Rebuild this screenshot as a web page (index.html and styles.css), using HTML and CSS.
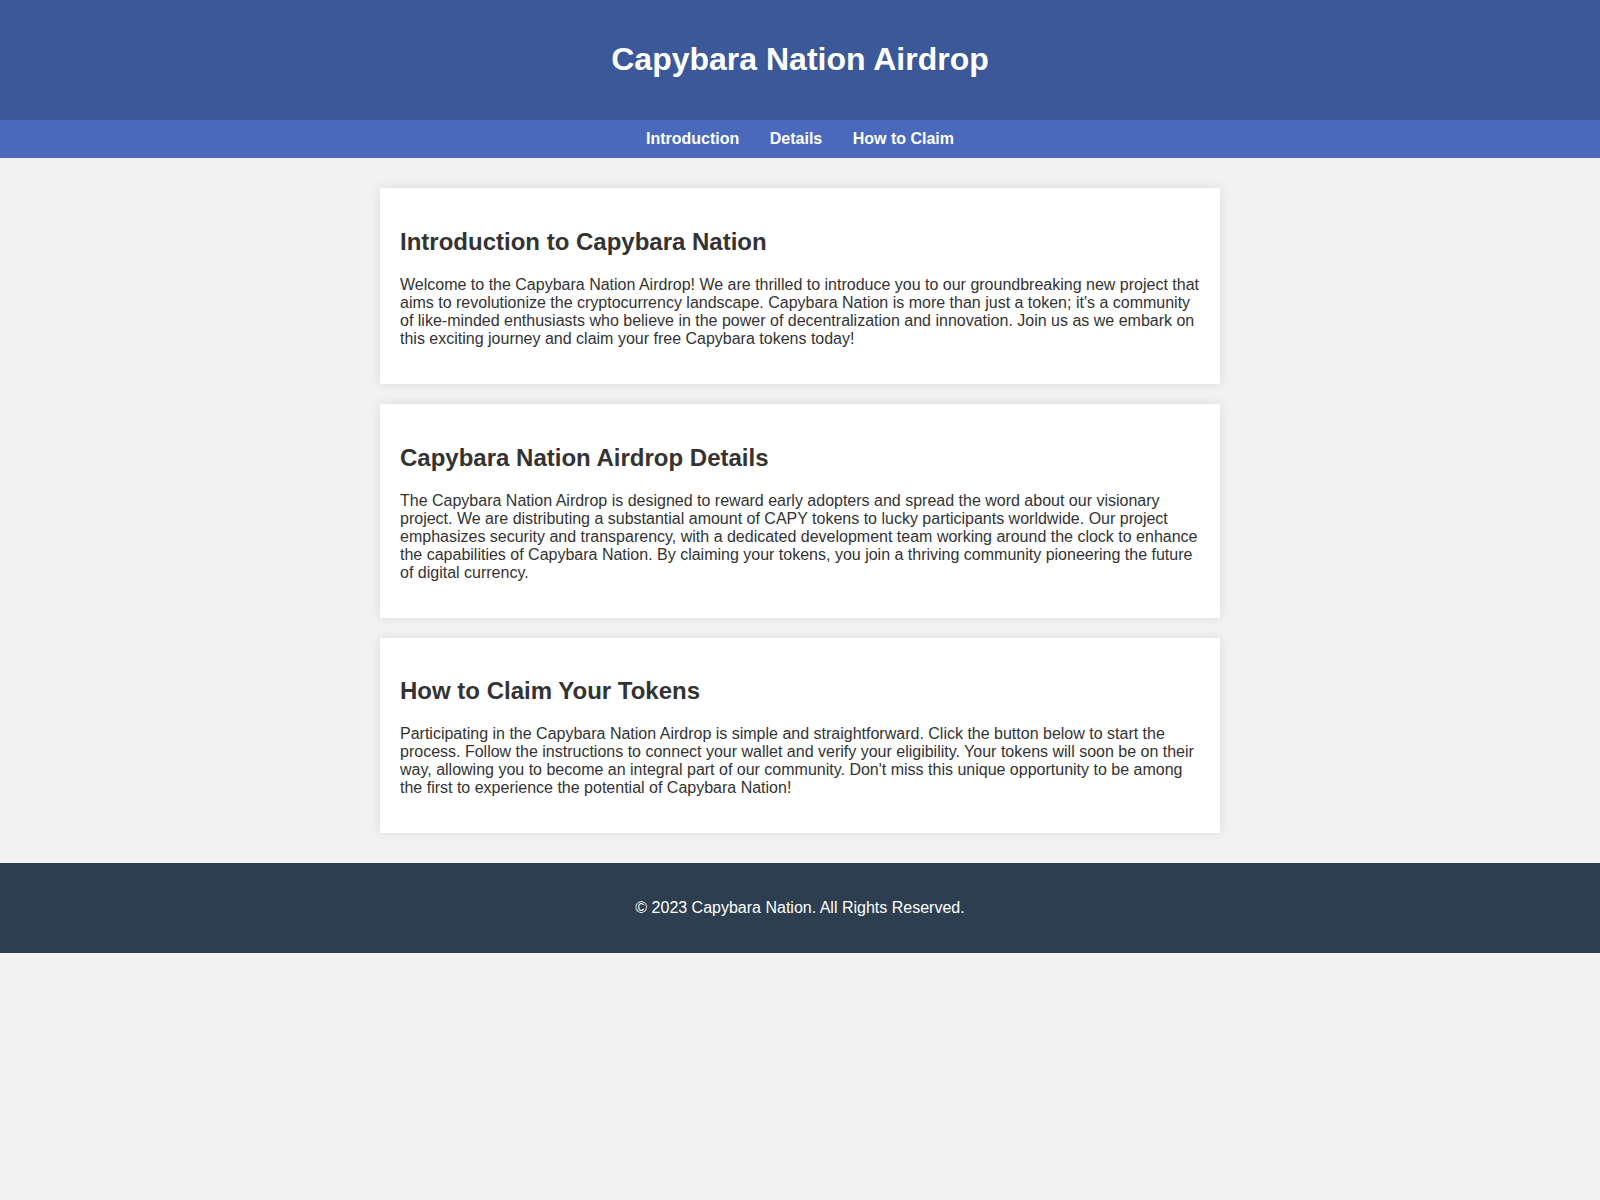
FILE: index.html
```html
<!DOCTYPE html>
<html lang="en">
<head>
  <meta charset="UTF-8" />
  <meta name="viewport" content="width=device-width, initial-scale=1.0"/>
  <title>Capybara Nation Airdrop</title>
  <link rel="stylesheet" href="styles.css">
</head>
<body>
  <header>
    <h1>Capybara Nation Airdrop</h1>
  </header>

  <nav>
    <a href="#introduction">Introduction</a>
    <a href="#details">Details</a>
    <a href="#claim">How to Claim</a>
  </nav>

  <main>
    <section id="introduction">
      <h2>Introduction to Capybara Nation</h2>
      <p>Welcome to the Capybara Nation Airdrop! We are thrilled to introduce you to our groundbreaking new project that aims to revolutionize the cryptocurrency landscape. Capybara Nation is more than just a token; it's a community of like-minded enthusiasts who believe in the power of decentralization and innovation. Join us as we embark on this exciting journey and claim your free Capybara tokens today!</p>
    </section>

    <section id="details">
      <h2>Capybara Nation Airdrop Details</h2>
      <p>The Capybara Nation Airdrop is designed to reward early adopters and spread the word about our visionary project. We are distributing a substantial amount of CAPY tokens to lucky participants worldwide. Our project emphasizes security and transparency, with a dedicated development team working around the clock to enhance the capabilities of Capybara Nation. By claiming your tokens, you join a thriving community pioneering the future of digital currency.</p>
    </section>

    <section id="claim">
      <h2>How to Claim Your Tokens</h2>
      <p>Participating in the Capybara Nation Airdrop is simple and straightforward. Click the button below to start the process. Follow the instructions to connect your wallet and verify your eligibility. Your tokens will soon be on their way, allowing you to become an integral part of our community. Don't miss this unique opportunity to be among the first to experience the potential of Capybara Nation!</p>
    </section>
  </main>

  <footer>
    <p>&copy; 2023 Capybara Nation. All Rights Reserved.</p>
  </footer>
</body>
</html>
```

FILE: styles.css
```css
body {
  font-family: "Liberation Sans", Arial, sans-serif;
  margin: 0;
  padding: 0;
  background-color: #f2f2f2;
  color: #333;
}

header {
  background-color: #3b5998;
  color: white;
  text-align: center;
  padding: 20px;
}

nav {
  background-color: #4a69bd;
  text-align: center;
  padding: 10px;
}

nav a {
  color: white;
  text-decoration: none;
  font-weight: bold;
  margin: 0 13px;
}

main {
  max-width: 840px;
  margin: 0 auto;
  padding: 10px 0;
}

section {
  background-color: white;
  padding: 20px;
  margin: 20px 0;
  box-shadow: 0 0 10px rgba(0, 0, 0, 0.1);
}

footer {
  background-color: #2c3e50;
  color: white;
  text-align: center;
  padding: 20px;
}
```
